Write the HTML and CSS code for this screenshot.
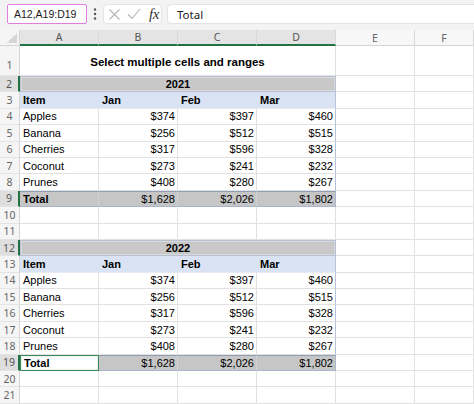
FILE: index.html
```html
<!DOCTYPE html>
<html>
<head>
<meta charset="utf-8">
<link rel="stylesheet" href="styles.css">
</head>
<body>
<div class="fbar">
  <div class="namebox">A12,A19:D19</div>
  <div class="dots">
    <svg width="4" height="14" viewBox="0 0 4 14"><circle cx="2" cy="2.5" r="1.2" fill="#555"/><circle cx="2" cy="7" r="1.2" fill="#555"/><circle cx="2" cy="11.5" r="1.2" fill="#555"/></svg>
  </div>
  <div class="fxbox">
    <svg class="ico" width="13" height="13" viewBox="0 0 13 13"><path d="M1.5 1.5 L11.5 11.5 M11.5 1.5 L1.5 11.5" stroke="#b3b3b3" stroke-width="1.1" fill="none"/></svg>
    <svg class="ico" width="14" height="12" viewBox="0 0 14 12"><path d="M1 6.5 L5 10.5 L13 1" stroke="#b3b3b3" stroke-width="1.1" fill="none"/></svg>
    <span class="fx">fx</span>
  </div>
  <div class="input">Total</div>
</div>

<div class="sheet">
  <div class="row hdr">
    <div class="corner"></div>
    <div class="ch sel">A</div><div class="ch sel">B</div><div class="ch sel">C</div><div class="ch sel">D</div><div class="ch">E</div><div class="ch">F</div>
  </div>

  <div class="row r1"><div class="rh">1</div><div class="c span4 title">Select multiple cells and ranges</div><div class="c"></div><div class="c"></div></div>

  <div class="row"><div class="rh sel">2</div><div class="c span4 year">2021</div><div class="c"></div><div class="c"></div></div>
  <div class="row"><div class="rh">3</div><div class="c th">Item</div><div class="c th">Jan</div><div class="c th">Feb</div><div class="c th tr">Mar</div><div class="c"></div><div class="c"></div></div>
  <div class="row"><div class="rh">4</div><div class="c">Apples</div><div class="c num">$374</div><div class="c num">$397</div><div class="c num tr">$460</div><div class="c"></div><div class="c"></div></div>
  <div class="row"><div class="rh">5</div><div class="c">Banana</div><div class="c num">$256</div><div class="c num">$512</div><div class="c num tr">$515</div><div class="c"></div><div class="c"></div></div>
  <div class="row"><div class="rh">6</div><div class="c">Cherries</div><div class="c num">$317</div><div class="c num">$596</div><div class="c num tr">$328</div><div class="c"></div><div class="c"></div></div>
  <div class="row"><div class="rh">7</div><div class="c">Coconut</div><div class="c num">$273</div><div class="c num">$241</div><div class="c num tr">$232</div><div class="c"></div><div class="c"></div></div>
  <div class="row"><div class="rh">8</div><div class="c">Prunes</div><div class="c num">$408</div><div class="c num">$280</div><div class="c num tr">$267</div><div class="c"></div><div class="c"></div></div>
  <div class="row"><div class="rh sel">9</div><div class="c tot b">Total</div><div class="c tot num">$1,628</div><div class="c tot num">$2,026</div><div class="c tot num tr">$1,802</div><div class="c"></div><div class="c"></div></div>
  <div class="row"><div class="rh">10</div><div class="c"></div><div class="c"></div><div class="c"></div><div class="c"></div><div class="c"></div><div class="c"></div></div>
  <div class="row"><div class="rh">11</div><div class="c"></div><div class="c"></div><div class="c"></div><div class="c"></div><div class="c"></div><div class="c"></div></div>

  <div class="row"><div class="rh sel">12</div><div class="c span4 year">2022</div><div class="c"></div><div class="c"></div></div>
  <div class="row"><div class="rh">13</div><div class="c th">Item</div><div class="c th">Jan</div><div class="c th">Feb</div><div class="c th tr">Mar</div><div class="c"></div><div class="c"></div></div>
  <div class="row"><div class="rh">14</div><div class="c">Apples</div><div class="c num">$374</div><div class="c num">$397</div><div class="c num tr">$460</div><div class="c"></div><div class="c"></div></div>
  <div class="row"><div class="rh">15</div><div class="c">Banana</div><div class="c num">$256</div><div class="c num">$512</div><div class="c num tr">$515</div><div class="c"></div><div class="c"></div></div>
  <div class="row"><div class="rh">16</div><div class="c">Cherries</div><div class="c num">$317</div><div class="c num">$596</div><div class="c num tr">$328</div><div class="c"></div><div class="c"></div></div>
  <div class="row"><div class="rh">17</div><div class="c">Coconut</div><div class="c num">$273</div><div class="c num">$241</div><div class="c num tr">$232</div><div class="c"></div><div class="c"></div></div>
  <div class="row"><div class="rh">18</div><div class="c">Prunes</div><div class="c num">$408</div><div class="c num">$280</div><div class="c num tr">$267</div><div class="c"></div><div class="c"></div></div>
  <div class="row"><div class="rh sel">19</div><div class="c active b">Total</div><div class="c tot num">$1,628</div><div class="c tot num">$2,026</div><div class="c tot num tr">$1,802</div><div class="c"></div><div class="c"></div></div>
  <div class="row"><div class="rh">20</div><div class="c"></div><div class="c"></div><div class="c"></div><div class="c"></div><div class="c"></div><div class="c"></div></div>
  <div class="row"><div class="rh">21</div><div class="c"></div><div class="c"></div><div class="c"></div><div class="c"></div><div class="c"></div><div class="c"></div></div>
</div>
</body>
</html>
```

FILE: styles.css
```css
* { box-sizing: border-box; }
html, body { margin: 0; padding: 0; }
body {
  width: 474px;
  height: 404px;
  overflow: hidden;
  background: #fff;
  font-family: "Liberation Sans", Arial, sans-serif;
}

/* formula bar */
.fbar {
  height: 30px;
  background: #f3f3f3;
  display: flex;
  align-items: flex-start;
  padding: 4px 0 0 7px;
}
.namebox {
  width: 80px;
  height: 20px;
  background: #fff;
  border: 1px solid #e27ee2;
  border-radius: 2px;
  display: flex;
  align-items: center;
  padding-left: 6px;
  font: 10.5px "Liberation Sans", Arial, sans-serif;
  color: #1a1a1a;
}
.dots {
  width: 16px;
  height: 20px;
  display: flex;
  align-items: center;
  justify-content: center;
}
.fxbox {
  width: 59px;
  height: 20px;
  background: #fff;
  border: 1px solid #e4e4e4;
  border-radius: 4px;
  display: flex;
  align-items: center;
  padding-left: 4px;
  gap: 6px;
}
.ico { display: block; }
.fx {
  font: italic 15px "Liberation Serif", serif;
  color: #333;
  margin-left: 2px;
  line-height: 1;
  letter-spacing: -0.5px;
}
.input {
  flex: 1;
  height: 20px;
  margin-left: 5px;
  background: #fff;
  border: 1px solid #e4e4e4;
  border-right: none;
  border-radius: 4px 0 0 4px;
  display: flex;
  align-items: center;
  padding-left: 9px;
  font: 11.5px "Noto Sans", sans-serif;
  color: #222;
}

/* sheet */
.row {
  display: grid;
  grid-template-columns: 20px 79px 79px 79px 79px 79px 1fr;
  height: 16.4px;
}
.row.hdr { height: 16px; }
.row.r1 { height: 30px; }

.corner {
  background: #f5f5f5;
  border-right: 1px solid #d4d4d4;
  border-bottom: 1px solid #d4d4d4;
  position: relative;
}
.corner::after {
  content: "";
  position: absolute;
  right: 2px;
  bottom: 2px;
  width: 10px;
  height: 10px;
  background: linear-gradient(135deg, transparent 50%, #d6d6d6 50%);
}
.ch {
  background: #f7f7f7;
  border-right: 1px solid #d8d8d8;
  border-bottom: 1px solid #d4d4d4;
  display: flex;
  align-items: center;
  justify-content: center;
  font: 10.5px "Noto Sans", sans-serif;
  color: #666;
}
.ch.sel {
  background: #e4e4e4;
  border-bottom: 2px solid #217346;
  color: #555;
}
.rh {
  background: #f5f5f5;
  border-right: 1px solid #d4d4d4;
  border-bottom: 1px solid #e4e4e4;
  display: flex;
  align-items: center;
  justify-content: center;
  font: 10.5px "Noto Sans", sans-serif;
  color: #666;
}
.r1 .rh { align-items: flex-end; padding-bottom: 3px; }
.rh.sel {
  background: #dedede;
  border-right: 2px solid #217346;
  color: #555;
}

.c {
  border-right: 1px solid #e1e1e1;
  border-bottom: 1px solid #e1e1e1;
  display: flex;
  align-items: center;
  padding: 0 3px;
  font-size: 11px;
  color: #000;
  white-space: nowrap;
  overflow: hidden;
}
.span4 { grid-column: span 4; }
.title {
  justify-content: center;
  align-items: flex-end;
  padding-bottom: 7px;
  font-weight: bold;
  font-size: 11.5px;
  border-right-color: #e1e1e1;
}
.year {
  justify-content: center;
  font-weight: bold;
  background: #c8c8c8;
  border: 1px solid #b7c1d3;
  box-shadow: inset 0 0 0 1px #dadada;
}
.th {
  background: #dae3f3;
  font-weight: bold;
  border-right-color: #dae3f3;
  border-bottom-color: #e6ebf3;
}
.th.tr { border-right-color: #b4c2da; }
.num { justify-content: flex-end; padding-right: 2px; }
.tr { border-right: 1px solid #b4c2da; }
.b { font-weight: bold; }
.tot {
  background: #c6c6c6;
  border-top: 1px solid #8f9db5;
  border-bottom: 1px solid #a8b5cc;
  border-right-color: #d2d2d2;
}
.tot.tr { border-right-color: #a8b5cc; }
.b.tot { border-right-color: #d2d2d2; }
.active {
  background: #fff;
  border: 1.5px solid #3e8b60;
  border-right-color: #3e8b60;
  box-shadow: inset 0 0 0 1px #e8f1eb;
}
```
